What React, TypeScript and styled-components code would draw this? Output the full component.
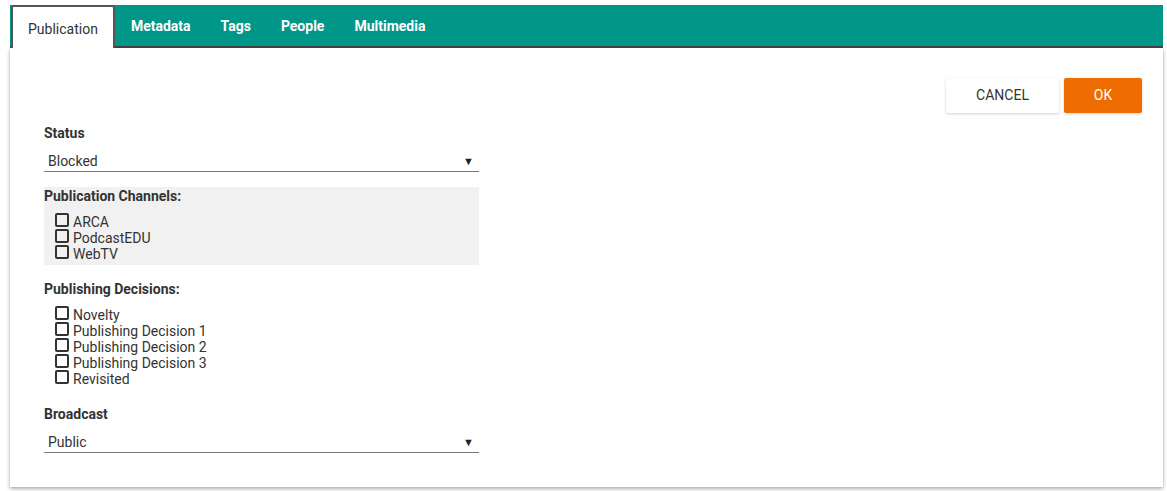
import React from "react";
import styled, { createGlobalStyle } from "styled-components";

const Global = createGlobalStyle`
  html, body { margin: 0; padding: 0; background: #fff; }
  body { font-family: Roboto, "Liberation Sans", Arial, sans-serif; color: #333; }
  * { box-sizing: border-box; }
`;

const Page = styled.div`
  padding: 5px 4px 4px 10px;
  width: 1167px;
`;

const TabBar = styled.div`
  display: flex;
  align-items: flex-end;
  height: 43px;
  background: #009688;
  border-bottom: 2px solid #444;
  padding-left: 1px;
`;

const Tab = styled.div<{ $active?: boolean }>`
  height: ${(p) => (p.$active ? "43px" : "41px")};
  margin-bottom: ${(p) => (p.$active ? "-2px" : "0")};
  display: flex;
  align-items: center;
  padding: ${(p) => (p.$active ? "2px 15px 0 15px" : "0 15px")};
  margin-right: ${(p) => (p.$active ? "1px" : "0")};
  font-size: 14px;
  font-weight: ${(p) => (p.$active ? 400 : 700)};
  color: ${(p) => (p.$active ? "#333" : "#fff")};
  background: ${(p) => (p.$active ? "#fff" : "transparent")};
  border: ${(p) => (p.$active ? "2px solid #555" : "none")};
  border-bottom: none;
  border-radius: 3px 3px 0 0;
`;

const Card = styled.div`
  background: #fff;
  height: 439px;
  box-shadow: 0 2px 4px rgba(0, 0, 0, 0.3), 0 0 2px rgba(0, 0, 0, 0.12);
  padding: 30px 21px 0 34px;
`;

const ButtonRow = styled.div`
  display: flex;
  justify-content: flex-end;
  gap: 5px;
`;

const Button = styled.button<{ $primary?: boolean }>`
  height: 35px;
  width: ${(p) => (p.$primary ? "78px" : "113px")};
  border: none;
  border-radius: 2px;
  padding: 0 0 1px 0;
  font-family: Roboto, "Liberation Sans", Arial, sans-serif;
  font-size: 14px;
  text-transform: uppercase;
  color: ${(p) => (p.$primary ? "#fff" : "#333")};
  background: ${(p) => (p.$primary ? "#ef6c00" : "#fff")};
  box-shadow: 0 1px 3px rgba(0, 0, 0, 0.18);
`;

const Form = styled.div`
  width: 435px;
  margin-top: 12px;
  display: flex;
  flex-direction: column;
`;

const Label = styled.div`
  font-size: 14px;
  line-height: 16px;
  font-weight: 700;
  color: #333;
`;

const Select = styled.div`
  margin-top: 7px;
  height: 24px;
  border-bottom: 1px solid #777;
  display: flex;
  align-items: center;
  justify-content: space-between;
  padding: 3px 4px 0 4px;
  font-size: 14px;
  color: #333;
`;

const Arrow = styled.span`
  font-size: 11px;
  color: #222;
  margin-right: 1px;
`;

const Group = styled.div<{ $shaded?: boolean }>`
  margin-top: ${(p) => (p.$shaded ? "15px" : "16px")};
  background: ${(p) => (p.$shaded ? "#f1f1f1" : "transparent")};
  padding: ${(p) => (p.$shaded ? "1px 0 3px 0" : "0")};
`;

const List = styled.div`
  margin-top: 10px;
  padding-left: 11px;
  display: flex;
  flex-direction: column;
`;

const Item = styled.label`
  display: flex;
  align-items: center;
  height: 16px;
  font-size: 14px;
  line-height: 16px;
  color: #333;
`;

const Box = styled.span`
  width: 14px;
  height: 14px;
  border: 2px solid #333;
  border-radius: 2px;
  margin-right: 4px;
  margin-top: -4px;
  background: transparent;
  flex: none;
`;

const Spacer = styled.div`
  height: 19px;
`;

function CheckList({ items }: { items: string[] }) {
  return (
    <List>
      {items.map((t) => (
        <Item key={t}>
          <Box />
          {t}
        </Item>
      ))}
    </List>
  );
}

export default function App() {
  return (
    <>
      <Global />
      <Page>
        <TabBar>
          <Tab $active>Publication</Tab>
          <Tab>Metadata</Tab>
          <Tab>Tags</Tab>
          <Tab>People</Tab>
          <Tab>Multimedia</Tab>
        </TabBar>
        <Card>
          <ButtonRow>
            <Button>Cancel</Button>
            <Button $primary>OK</Button>
          </ButtonRow>
          <Form>
            <Label>Status</Label>
            <Select>
              <span>Blocked</span>
              <Arrow>▼</Arrow>
            </Select>
            <Group $shaded>
              <Label>Publication Channels:</Label>
              <CheckList items={["ARCA", "PodcastEDU", "WebTV"]} />
            </Group>
            <Group>
              <Label>Publishing Decisions:</Label>
              <CheckList
                items={[
                  "Novelty",
                  "Publishing Decision 1",
                  "Publishing Decision 2",
                  "Publishing Decision 3",
                  "Revisited",
                ]}
              />
            </Group>
            <Spacer />
            <Label>Broadcast</Label>
            <Select>
              <span>Public</span>
              <Arrow>▼</Arrow>
            </Select>
          </Form>
        </Card>
      </Page>
    </>
  );
}
